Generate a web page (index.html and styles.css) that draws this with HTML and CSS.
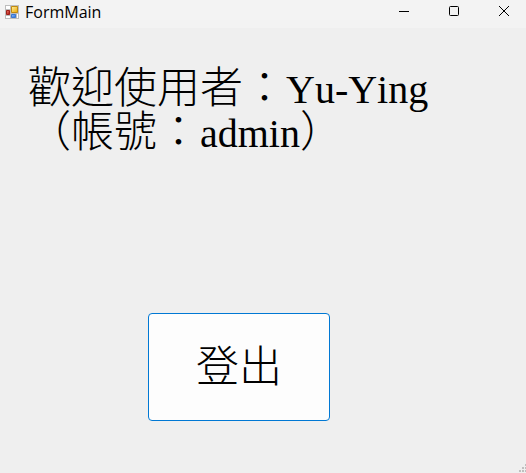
FILE: index.html
```html
<!DOCTYPE html>
<html lang="zh-Hant">
<head>
<meta charset="utf-8">
<title>FormMain</title>
<link rel="stylesheet" href="styles.css">
</head>
<body>
<header class="titlebar">
  <svg class="app-icon" width="14" height="14" viewBox="0 0 14 14" aria-hidden="true">
    <defs>
      <linearGradient id="gold" x1="0" y1="0" x2="1" y2="1"><stop offset="0" stop-color="#fff0a0"/><stop offset="1" stop-color="#eda800"/></linearGradient>
      <linearGradient id="red" x1="0" y1="0" x2="1" y2="1"><stop offset="0" stop-color="#f08070"/><stop offset="1" stop-color="#a80c08"/></linearGradient>
      <linearGradient id="blue" x1="0" y1="0" x2="1" y2="1"><stop offset="0" stop-color="#8fc0ff"/><stop offset="1" stop-color="#2868d8"/></linearGradient>
    </defs>
    <path d="M0 0h14v14H0z" fill="#bdbdbd"/>
    <path d="M1 1h4v3H1zM1 11h4v2H1zM12 9h1v4h-1z" fill="#fff"/>
    <path d="M6.500 1.500h6v6h-6z" fill="url(#gold)" stroke="#c08a10"/>
    <path d="M1.500 5.500h3v4h-3z" fill="url(#red)" stroke="#a02018"/>
    <path d="M6.500 9.500h4v3h-4z" fill="url(#blue)" stroke="#3a78d0"/>
  </svg>
  <h1 class="title">FormMain</h1>
  <div class="window-controls">
    <button class="control" type="button" aria-label="Minimize"><svg width="12" height="12" viewBox="0 0 12 12"><path d="M1 6.500h10"/></svg></button>
    <button class="control" type="button" aria-label="Maximize"><svg width="12" height="12" viewBox="0 0 12 12"><rect x="1.500" y="1.500" width="9" height="9" rx="1"/></svg></button>
    <button class="control" type="button" aria-label="Close"><svg width="12" height="12" viewBox="0 0 12 12"><path d="M1 1l10 10M11 1L1 11"/></svg></button>
  </div>
</header>
<main class="form">
  <p class="welcome">歡迎使用者：<span class="latin">Yu-Ying</span><br>（帳號：<span class="latin">admin</span>）</p>
  <button class="logout" type="button">登出</button>
</main>
<svg class="size-grip" width="7" height="9" viewBox="0 0 7 9" aria-hidden="true"><path d="M6 0h2v2H6zM3 3h2v2H3zM6 3h2v2H6zM0 6h2v2H0zM3 6h2v2H3zM6 6h2v2H6z"/></svg>
</body>
</html>
```
FILE: styles.css
```css
* {
  box-sizing: border-box;
}

body {
  margin: 0;
  min-height: 100vh;
  display: flex;
  flex-direction: column;
  background: #efefef;
  color: #000;
}

.titlebar {
  display: flex;
  align-items: center;
  height: 28px;
  padding-left: 5px;
  background: #f3f3f3;
}

.app-icon {
  margin-bottom: 5px;
}

.title {
  margin: 0 0 4px 6px;
  font: 400 16px/24px "Open Sans", "Noto Sans", sans-serif;
}

.window-controls {
  display: flex;
  gap: 6px;
  margin-left: auto;
  margin-bottom: 6px;
}

.control {
  display: flex;
  align-items: center;
  justify-content: center;
  width: 44px;
  height: 22px;
  padding: 0;
  border: 0;
  background: transparent;
}

.control svg {
  fill: none;
  stroke: #000;
}

.form {
  flex: 1;
  padding: 39px 28px 0;
}

.welcome,
.logout {
  font-family: "Liberation Serif", "Noto Sans CJK TC", serif;
  font-size: 43px;
  font-weight: 300;
  line-height: 43px;
}

.welcome {
  margin: 0;
  font-kerning: none;
}

.latin {
  font-size: 40px;
}

.logout {
  display: block;
  width: 182px;
  height: 108px;
  margin: 158px 0 0 120px;
  padding: 0;
  border: 1px solid #0078d4;
  border-radius: 4px;
  background: #fdfdfd;
  color: #000;
}

.size-grip {
  align-self: flex-end;
  fill: #bfbfbf;
}
```
